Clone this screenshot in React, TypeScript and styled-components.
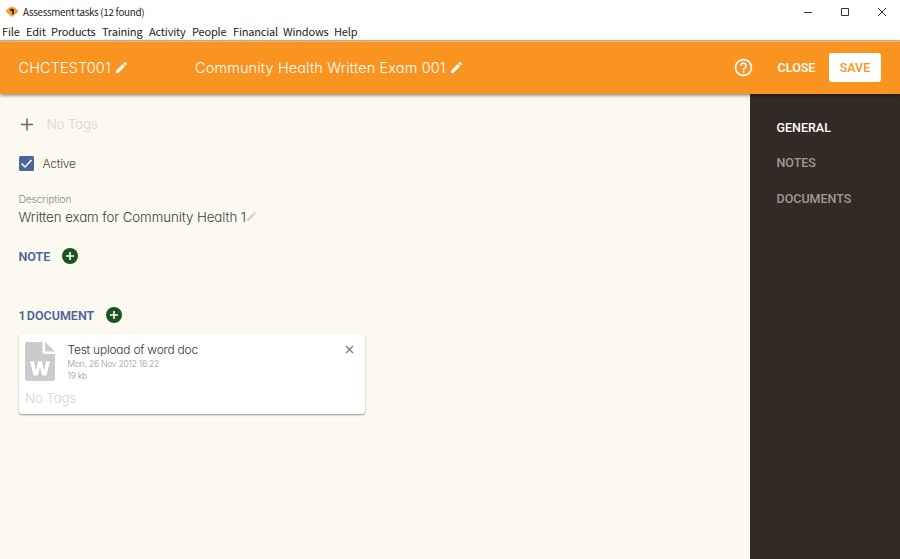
import React from 'react';
import styled, { createGlobalStyle } from 'styled-components';

const GlobalStyle = createGlobalStyle`
  * { box-sizing: border-box; }
  body { margin: 0; background: #fcf9f0; }
`;

const Window = styled.div`
  width: 900px;
  height: 559px;
  display: flex;
  flex-direction: column;
  overflow: hidden;
  background: #fcf9f0;
  font-family: Inter, sans-serif;
  font-feature-settings: 'cv11' 1, 'ss03' 1;
  color: #555;
`;

const TitleBar = styled.div`
  height: 24px;
  flex: none;
  display: flex;
  align-items: center;
  padding-left: 5px;
  background: #fff;
  font-family: 'Noto Sans CJK SC', sans-serif;
  color: #1c1c1c;
`;

const WindowTitle = styled.span`
  margin-left: 4px;
  flex: 1;
  font-size: 9.8px;
  letter-spacing: -0.28px;
  line-height: 24px;
`;

const WindowControls = styled.div`
  display: flex;
  gap: 27px;
  padding-right: 13px;
`;

const MenuBar = styled.nav`
  height: 17px;
  flex: none;
  display: flex;
  padding-left: 2px;
  background: #fff;
  border-bottom: 1px solid #c9cace;
  font-family: 'Noto Sans CJK SC', sans-serif;
  color: #222;
`;

const MenuItem = styled.span<{ $width: number }>`
  width: ${(p) => p.$width}px;
  flex: none;
  font-size: 11px;
  letter-spacing: -0.18px;
  line-height: 15px;
  white-space: nowrap;
`;

const AppBar = styled.header`
  height: 53px;
  flex: none;
  display: flex;
  align-items: center;
  padding: 0 19px 1px 18.5px;
  border-top: 1px solid #f0b467;
  background: #f8941f;
  color: #fff;
  box-shadow: 0 1px 4px rgba(0, 0, 0, 0.55);
  z-index: 1;
`;

const AppTitle = styled.div<{ $width?: number; $spacing: number }>`
  display: flex;
  align-items: center;
  gap: 5px;
  ${(p) => (p.$width ? `width: ${p.$width}px;` : 'flex: 1;')}
  font-size: 14.5px;
  font-weight: 300;
  letter-spacing: ${(p) => p.$spacing}px;
  white-space: nowrap;
`;

const Button = styled.button<{ $filled?: boolean }>`
  height: 29px;
  width: ${(p) => (p.$filled ? 52 : 65)}px;
  padding: 0;
  border: 0;
  border-radius: 3px;
  background: ${(p) => (p.$filled ? '#fff' : 'transparent')};
  color: ${(p) => (p.$filled ? '#f8941f' : '#fff')};
  font: 500 12.5px Roboto, sans-serif;
`;

const Body = styled.div`
  flex: 1;
  display: flex;
`;

const Main = styled.main`
  flex: 1;
  padding: 20px 0 0 18.5px;
`;

const Sidebar = styled.aside`
  width: 150px;
  padding: 15.500px 0 0 26.500px;
  background: #322a25;
`;

const SideItem = styled.div<{ $active?: boolean }>`
  height: 35.7px;
  color: ${(p) => (p.$active ? '#fff' : '#9f9a96')};
  font: 500 12.5px/36px Roboto, sans-serif;
`;

const Row = styled.div<{ $height: number; $gap: number; $top?: number }>`
  display: flex;
  align-items: center;
  height: ${(p) => p.$height}px;
  gap: ${(p) => p.$gap}px;
  margin-top: ${(p) => p.$top ?? 0}px;
`;

const NoTags = styled.span`
  display: block;
  font-size: 13.5px;
  font-weight: 300;
  line-height: 20px;
  letter-spacing: -0.25px;
  color: #d8d6d0;
`;

const Label = styled.span`
  font-size: 12px;
  font-weight: 350;
  color: #444;
  letter-spacing: -0.2px;
`;

const FieldLabel = styled.div`
  margin-top: 20px;
  font-size: 10.5px;
  font-weight: 350;
  letter-spacing: -0.27px;
  line-height: 14px;
  color: #8c8984;
`;

const FieldValue = styled.div`
  display: flex;
  align-items: center;
  height: 19px;
  gap: 1px;
  font-size: 13.3px;
  font-weight: 350;
  letter-spacing: -0.07px;
  line-height: 18px;
  color: #404040;
  white-space: nowrap;
`;

const SectionTitle = styled.span`
  color: #4b659b;
  font: 600 12.5px Roboto, sans-serif;
  word-spacing: -2px;
`;

const Card = styled.section`
  width: 346.5px;
  height: 80px;
  margin-top: 9px;
  padding: 8px 9px 0 6.5px;
  border-radius: 3px;
  background: #fff;
  box-shadow: 0 1px 2px rgba(0, 0, 0, 0.4);
`;

const CardTop = styled.div`
  display: flex;
  height: 46px;
`;

const CardText = styled.div`
  flex: 1;
  margin-left: 12.5px;
`;

const DocName = styled.div`
  height: 16px;
  font-size: 12px;
  font-weight: 350;
  letter-spacing: -0.24px;
  line-height: 15px;
  color: #333;
`;

const DocMeta = styled.div`
  font-size: 8.5px;
  font-weight: 350;
  letter-spacing: -0.22px;
  line-height: 12px;
  color: #999;
`;

const Icon = styled.svg`
  display: block;
  flex: none;
`;

const HelpIcon = styled(Icon)`
  margin-right: 10.5px;
`;

const Pencil = ({ size, color }: { size: number; color: string }) => (
  <Icon width={size} height={size} viewBox="3 3 18 18" fill={color}>
    <path d="M3 17.25V21h3.75L17.81 9.94l-3.75-3.75L3 17.25zM20.71 7.04a1 1 0 0 0 0-1.41l-2.34-2.34a1 1 0 0 0-1.41 0l-1.83 1.83 3.75 3.75 1.83-1.83z" />
  </Icon>
);

const AddCircle = () => (
  <Icon width="16" height="16" viewBox="0 0 16 16">
    <circle cx="8" cy="8" r="8" fill="#1b541e" />
    <path d="M8 4v8M4 8h8" stroke="#fff" strokeWidth="1.6" />
  </Icon>
);

const menu: [string, number][] = [
  ['File', 24], ['Edit', 25], ['Products', 51], ['Training', 47], ['Activity', 43],
  ['People', 41], ['Financial', 50], ['Windows', 51], ['Help', 30],
];

export default function App() {
  return (
    <Window>
      <GlobalStyle />
      <TitleBar>
        <Icon width="14" height="12" viewBox="0 0 14 12">
          <path d="M.5 5.5 3.5 2 7 .5 10.5 2l3 3.500L7 11z" fill="#f4a138" />
          <path d="M5 3.300 7 2.500l2 1v4L7.200 9V5L5 4.700z" fill="#3d2917" />
        </Icon>
        <WindowTitle>Assessment tasks (12 found)</WindowTitle>
        <WindowControls>
          <Icon width="10" height="10" viewBox="0 0 10 10"><path d="M1 5.5h8" stroke="#333" /></Icon>
          <Icon width="10" height="10" viewBox="0 0 10 10"><path d="M1.5 1.5h7v7h-7z" fill="none" stroke="#333" /></Icon>
          <Icon width="10" height="10" viewBox="0 0 10 10"><path d="m1 1 8 8M9 1 1 9" stroke="#333" /></Icon>
        </WindowControls>
      </TitleBar>
      <MenuBar>
        {menu.map(([name, width]) => <MenuItem key={name} $width={width}>{name}</MenuItem>)}
      </MenuBar>
      <AppBar>
        <AppTitle $width={176.5} $spacing={0.1}>CHCTEST001<Pencil size={11} color="#fff" /></AppTitle>
        <AppTitle $spacing={0.12}>Community Health Written Exam 001<Pencil size={11} color="#fff" /></AppTitle>
        <HelpIcon width="21" height="21" viewBox="0 0 24 24" fill="#fff">
          <path d="M11 18h2v-2h-2v2zm1-16C6.48 2 2 6.48 2 12s4.48 10 10 10 10-4.48 10-10S17.52 2 12 2zm0 18c-4.41 0-8-3.59-8-8s3.59-8 8-8 8 3.59 8 8-3.59 8-8 8zm0-14c-2.21 0-4 1.79-4 4h2c0-1.1.9-2 2-2s2 .9 2 2c0 2-3 1.75-3 5h2c0-2.25 3-2.5 3-5 0-2.21-1.79-4-4-4z" />
        </HelpIcon>
        <Button>CLOSE</Button>
        <Button $filled>SAVE</Button>
      </AppBar>
      <Body>
        <Main>
          <Row $height={20} $gap={11}>
            <Icon width="17" height="17" viewBox="0 0 17 17"><path d="M8 2.5v12M2 8.500h12" stroke="#666" strokeWidth="1.500" /></Icon>
            <NoTags>No Tags</NoTags>
          </Row>
          <Row $height={20} $gap={9} $top={19}>
            <Icon width="15" height="15" viewBox="0 0 15 15">
              <rect width="15" height="15" rx="1.5" fill="#4b659b" />
              <path d="m2.500 7.500 3.500 3.500 6.500-7" fill="none" stroke="#fff" strokeWidth="1.500" />
            </Icon>
            <Label>Active</Label>
          </Row>
          <FieldLabel>Description</FieldLabel>
          <FieldValue>Written exam for Community Health 1<Pencil size={9} color="#d8d5ce" /></FieldValue>
          <Row $height={20} $gap={12} $top={20}><SectionTitle>NOTE</SectionTitle><AddCircle /></Row>
          <Row $height={20} $gap={12} $top={39}><SectionTitle>1 DOCUMENT</SectionTitle><AddCircle /></Row>
          <Card>
            <CardTop>
              <Icon width="30" height="39" viewBox="0 0 30 39">
                <path d="M2 0h15.500v10a2 2 0 0 0 2 2H30v25a2 2 0 0 1-2 2H2a2 2 0 0 1-2-2V2a2 2 0 0 1 2-2zM20 0l10 9.500H20z" fill="#cbcbcb" />
                <path d="M5 19.500h4l1.800 9 2.200-9h4l2.200 9 1.800-9h4l-3.700 14h-4L15 25.500l-2.300 8h-4z" fill="#fff" />
              </Icon>
              <CardText>
                <DocName>Test upload of word doc</DocName>
                <DocMeta>Mon, 26 Nov 2012 16:22</DocMeta>
                <DocMeta>19 kb</DocMeta>
              </CardText>
              <Icon width="13" height="15" viewBox="0 0 13 15"><path d="m3 4 7 7M10 4l-7 7" stroke="#777" strokeWidth="1.200" /></Icon>
            </CardTop>
            <NoTags>No Tags</NoTags>
          </Card>
        </Main>
        <Sidebar>
          <SideItem $active>GENERAL</SideItem>
          <SideItem>NOTES</SideItem>
          <SideItem>DOCUMENTS</SideItem>
        </Sidebar>
      </Body>
    </Window>
  );
}
